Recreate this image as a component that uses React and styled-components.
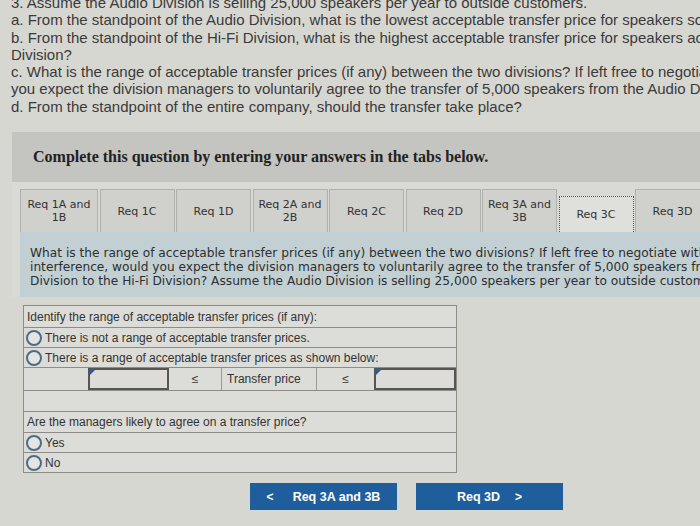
import React from "react";
import styled, { createGlobalStyle } from "styled-components";

const GlobalStyle = createGlobalStyle`
  body {
    margin: 0;
    background: #d7d7d2;
    overflow: hidden;
  }
`;

const Page = styled.div`
  width: 700px;
  height: 526px;
  overflow: hidden;
  background: #d7d7d2;
`;

const Prompt = styled.div`
  margin-top: -6px;
  padding-left: 11px;
  font-family: "Liberation Sans", Arial, sans-serif;
  font-size: 15px;
  line-height: 17.3px;
  color: #3a3a3a;
`;

const PromptLine = styled.div`
  white-space: nowrap;
`;

const Content = styled.div`
  margin: 17px 0 0 12px;
`;

const Header = styled.div`
  height: 50px;
  display: flex;
  align-items: center;
  padding-left: 21px;
  background: #c4c4c0;
  font-family: "Liberation Serif", "Times New Roman", serif;
  font-weight: bold;
  font-size: 16px;
  color: #222;
`;

const Body = styled.div`
  padding: 7px 0 0 8px;
  background: #d9d9d5;
`;

const Tabs = styled.div`
  display: flex;
  align-items: flex-end;
  gap: 1.5px;
  height: 43px;
`;

const Tab = styled.div`
  flex: 0 0 ${({ $wide }) => ($wide ? 78 : 75)}px;
  height: ${({ $active }) => ($active ? 36 : 43)}px;
  box-sizing: border-box;
  display: flex;
  align-items: center;
  justify-content: center;
  text-align: center;
  background: ${({ $active }) => ($active ? "#dfdfdb" : "#d0d0cc")};
  border: 1px ${({ $active }) => ($active ? "dotted #555" : "solid #b0b0ac")};
  border-bottom: none;
  font-family: "DejaVu Sans", Verdana, sans-serif;
  font-size: 11px;
  line-height: 13px;
  color: #333;
`;

const Band = styled.div`
  background: #c2d0d4;
  padding: 14px 0 9px 10px;
  font-family: "DejaVu Sans", Verdana, sans-serif;
  font-size: 12.2px;
  line-height: 14px;
  color: #2e2e2e;
`;

const BandLine = styled.div`
  white-space: nowrap;
`;

const Form = styled.div`
  padding: 8px 0 0 23px;
  margin-left: -12px;
  background: #d7d7d2;
`;

const Table = styled.div`
  width: 432px;
  border: 1px solid #8c8c88;
  font-family: "Liberation Sans", Arial, sans-serif;
  font-size: 12px;
  color: #333;
`;

const Row = styled.div`
  box-sizing: border-box;
  height: ${({ $h }) => $h || 20}px;
  display: flex;
  align-items: center;
  gap: 3px;
  padding-left: 3px;
  background: #dcdcd8;
  border-top: ${({ $first }) => ($first ? "none" : "1px solid #8c8c88")};
`;

const Radio = styled.span`
  width: 12px;
  height: 12px;
  border: 2px solid #4e6b85;
  border-radius: 50%;
  background: #e4e4e2;
  margin-left: -1px;
`;

const RangeRow = styled.div`
  box-sizing: border-box;
  display: grid;
  grid-template-columns: 64px 81px 52px 95px 58px 1fr;
  height: 23px;
  border-top: 1px solid #8c8c88;
  background: #dcdcd8;
`;

const Cell = styled.div`
  display: flex;
  align-items: center;
  justify-content: ${({ $center }) => ($center ? "center" : "flex-start")};
  padding-left: ${({ $center }) => ($center ? 0 : 5)}px;
  & + & {
    border-left: 1px solid #9a9a96;
  }
`;

const InputBox = styled.div`
  position: relative;
  border: 2px solid #555;
  background: #dddcd8;
  &::before {
    content: "";
    position: absolute;
    top: 0;
    left: 0;
    border-top: 5px solid #2a5a9a;
    border-right: 5px solid transparent;
  }
`;

const EmptyRow = styled.div`
  box-sizing: border-box;
  height: 21px;
  border-top: 1px solid #8c8c88;
  background: #dcdcd8;
`;

const Buttons = styled.div`
  display: flex;
  gap: 19px;
  padding: 10px 0 0 227px;
`;

const NavButton = styled.div`
  width: 147px;
  height: 27px;
  display: flex;
  align-items: center;
  justify-content: center;
  gap: ${({ $gap }) => $gap}px;
  background: #1f5e9c;
  color: #fff;
  font-family: "Liberation Sans", Arial, sans-serif;
  font-weight: bold;
  font-size: 12.5px;
`;

const Chevron = styled.span`
  font-size: 12px;
  font-weight: bold;
`;

const tabs = [
  ["Req 1A and", "1B"],
  ["Req 1C"],
  ["Req 1D"],
  ["Req 2A and", "2B"],
  ["Req 2C"],
  ["Req 2D"],
  ["Req 3A and", "3B"],
  ["Req 3C"],
  ["Req 3D"],
];

export default function App() {
  return (
    <Page>
      <GlobalStyle />
      <Prompt>
        <PromptLine>3. Assume the Audio Division is selling 25,000 speakers per year to outside customers.</PromptLine>
        <PromptLine>a. From the standpoint of the Audio Division, what is the lowest acceptable transfer price for speakers sold to the Hi-Fi Division?</PromptLine>
        <PromptLine>b. From the standpoint of the Hi-Fi Division, what is the highest acceptable transfer price for speakers acquired from the Audio</PromptLine>
        <PromptLine>Division?</PromptLine>
        <PromptLine>c. What is the range of acceptable transfer prices (if any) between the two divisions? If left free to negotiate without interference, would</PromptLine>
        <PromptLine>you expect the division managers to voluntarily agree to the transfer of 5,000 speakers from the Audio Division to the Hi-Fi Division?</PromptLine>
        <PromptLine>d. From the standpoint of the entire company, should the transfer take place?</PromptLine>
      </Prompt>
      <Content>
        <Header>Complete this question by entering your answers in the tabs below.</Header>
        <Body>
          <Tabs>
            {tabs.map((t, i) => (
              <Tab key={i} $wide={i === 0} $active={i === 7}>
                <div>
                  {t[0]}
                  {t[1] && <br />}
                  {t[1]}
                </div>
              </Tab>
            ))}
          </Tabs>
          <Band>
            <BandLine>What is the range of acceptable transfer prices (if any) between the two divisions? If left free to negotiate without</BandLine>
            <BandLine>interference, would you expect the division managers to voluntarily agree to the transfer of 5,000 speakers from the Audio</BandLine>
            <BandLine>Division to the Hi-Fi Division? Assume the Audio Division is selling 25,000 speakers per year to outside customers.</BandLine>
          </Band>
        </Body>
        <Form>
          <Table>
            <Row $first $h={21}>Identify the range of acceptable transfer prices (if any):</Row>
            <Row>
              <Radio />
              There is not a range of acceptable transfer prices.
            </Row>
            <Row>
              <Radio />
              There is a range of acceptable transfer prices as shown below:
            </Row>
            <RangeRow>
              <Cell />
              <InputBox />
              <Cell $center>≤</Cell>
              <Cell>Transfer price</Cell>
              <Cell $center>≤</Cell>
              <InputBox />
            </RangeRow>
            <EmptyRow />
            <Row $h={21}>Are the managers likely to agree on a transfer price?</Row>
            <Row>
              <Radio />
              Yes
            </Row>
            <Row>
              <Radio />
              No
            </Row>
          </Table>
          <Buttons>
            <NavButton $gap={19}>
              <Chevron>&lt;</Chevron>
              Req 3A and 3B
            </NavButton>
            <NavButton $gap={15}>
              Req 3D
              <Chevron>&gt;</Chevron>
            </NavButton>
          </Buttons>
        </Form>
      </Content>
    </Page>
  );
}
